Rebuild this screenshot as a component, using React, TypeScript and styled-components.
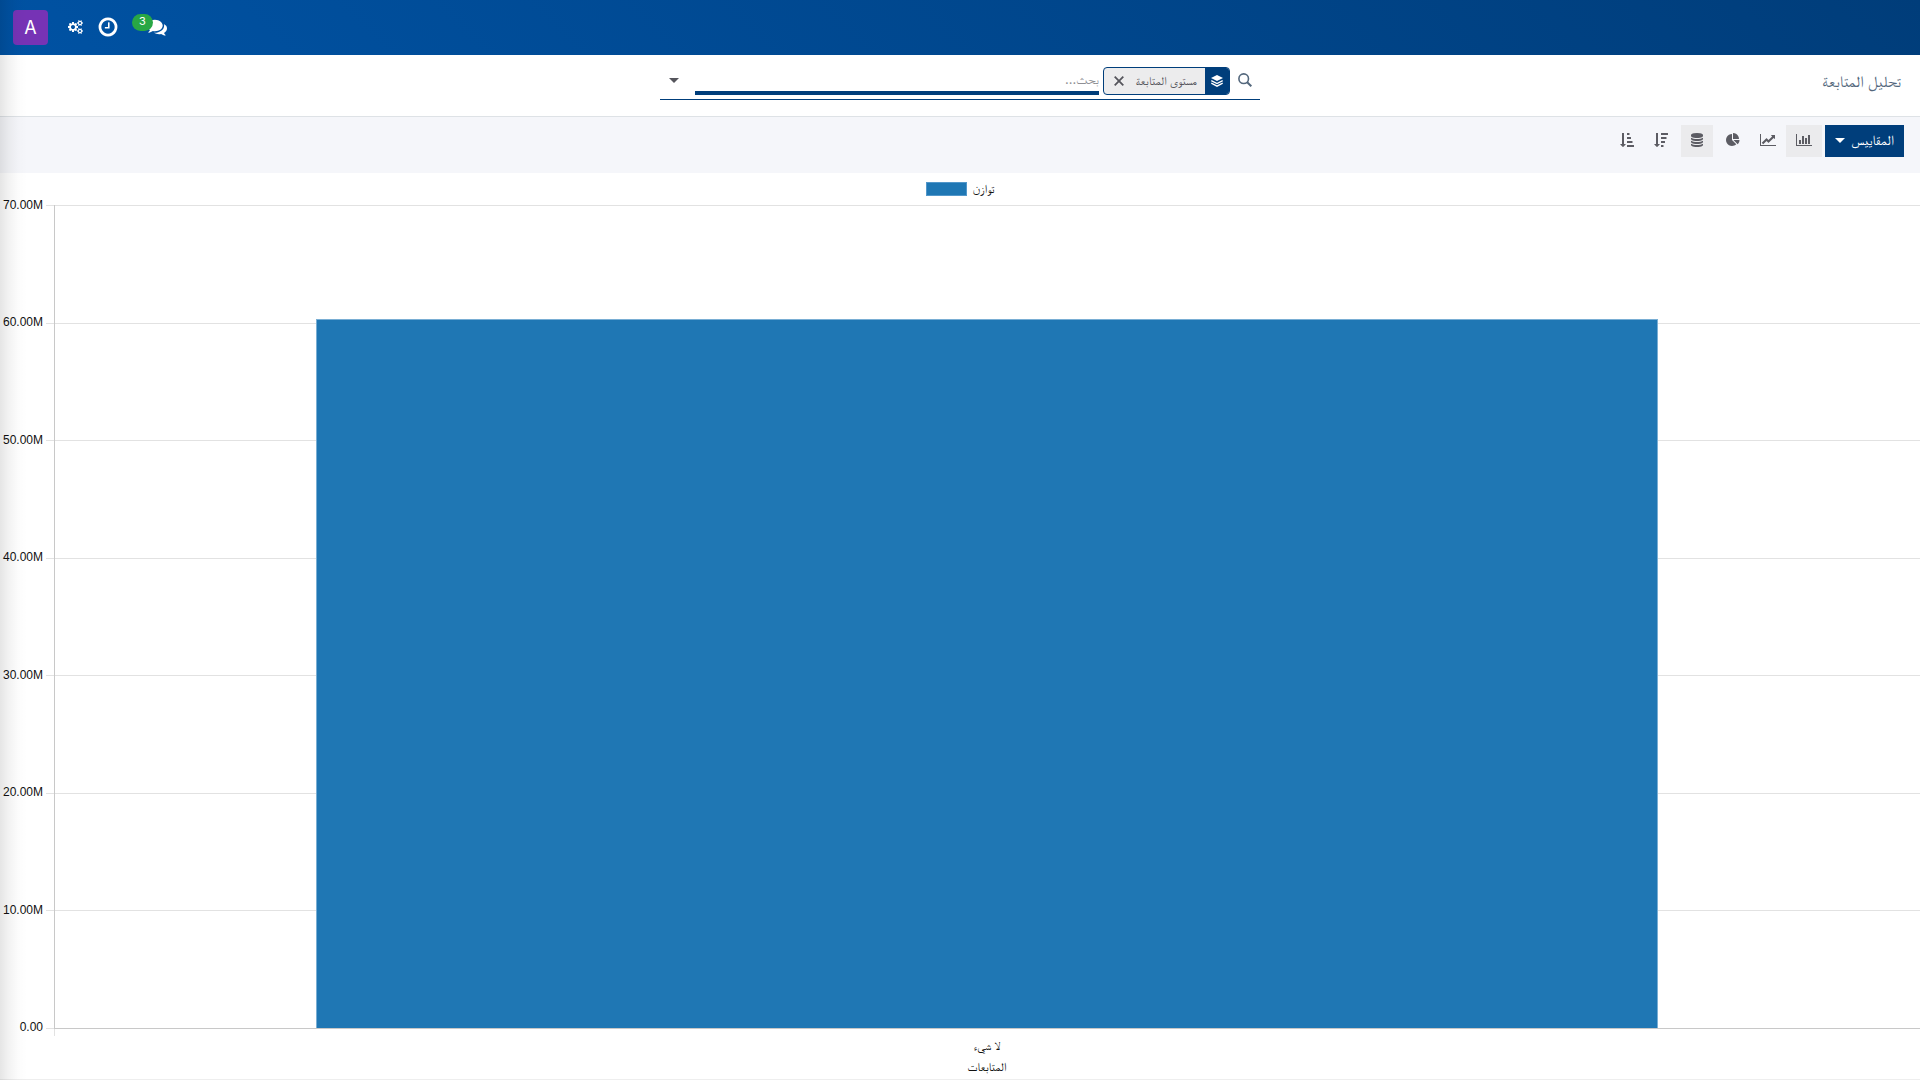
import React from "react";
import styled, { createGlobalStyle } from "styled-components";

const GlobalStyle = createGlobalStyle`
  *, *::before, *::after { box-sizing: border-box; }
  body {
    margin: 0;
    background: #fff;
    color: #55555c;
    font-family: "Inter", "FreeSerif", "Noto Naskh Arabic", sans-serif;
    font-size: 14px;
  }
  button, input { font: inherit; color: inherit; margin: 0; }
`;

const Page = styled.div`
  position: relative;
  display: flex;
  flex-direction: column;
  min-height: 100vh;
  overflow: hidden;
`;

const EdgeShadow = styled.div`
  position: absolute;
  inset: 0 auto 0 0;
  width: 28px;
  pointer-events: none;
  background: linear-gradient(to right, rgba(0, 0, 0, 0.1), rgba(0, 0, 0, 0.05) 30%, rgba(0, 0, 0, 0.01) 65%, transparent);
`;

const Navbar = styled.header`
  display: flex;
  justify-content: flex-end;
  height: 55px;
  padding: 0 13px;
  background: linear-gradient(45deg, #0052a3, #003d7a);
  color: #fff;
`;

const Systray = styled.nav`
  display: flex;
  align-items: center;
  gap: 14px;
`;

const TrayButton = styled.button`
  display: flex;
  align-items: center;
  padding: 0 0 2px;
  border: 0;
  background: none;
  color: #fff;
  cursor: pointer;
`;

const MessagesButton = styled(TrayButton)`
  position: relative;
  margin-left: 14px;
`;

const Counter = styled.span`
  position: absolute;
  left: -15px;
  top: -3px;
  width: 21px;
  height: 17px;
  border-radius: 9px;
  background: #28a745;
  font-size: 11px;
  line-height: 15px;
  text-align: center;
`;

const AvatarButton = styled(TrayButton)`
  justify-content: center;
  width: 35px;
  height: 35px;
  margin-right: 6px;
  padding: 0;
  border-radius: 4px;
  background: #7633b5;
  font-size: 18px;
`;

const Glyph = styled.svg<{ $size: number }>`
  display: block;
  height: ${(p) => p.$size}px;
  fill: currentColor;
`;

const ControlPanel = styled.div`
  display: grid;
  grid-template-columns: 1fr 600px 1fr;
  align-items: start;
  height: 62px;
  padding: 12px 19px 0;
  border-bottom: 1px solid #dee2e6;
`;

const Title = styled.h1`
  margin: 0;
  color: #53677c;
  font-size: 16px;
  font-weight: 400;
  line-height: 28px;
`;

const SearchBar = styled.form`
  display: flex;
  align-items: flex-start;
  height: 33px;
  border-bottom: 1px solid #003e7b;
`;

const SearchIcon = styled.label`
  display: flex;
  width: 30px;
  height: 26px;
  align-items: center;
  justify-content: center;
`;

const Facet = styled.div`
  display: flex;
  height: 28px;
  margin-left: 4px;
  border: 1px solid #003e7b;
  border-radius: 4px;
  background: #ececed;
  overflow: hidden;
`;

const FacetIcon = styled.span`
  display: flex;
  align-items: center;
  justify-content: center;
  width: 24px;
  background: #003e7b;
  color: #fff;
`;

const FacetLabel = styled.span`
  padding: 0 8px 0 4px;
  font-size: 12px;
  line-height: 26px;
`;

const FacetRemove = styled.button`
  display: flex;
  align-items: center;
  padding: 0 8px 0 10px;
  border: 0;
  background: none;
  cursor: pointer;
`;

const SearchInput = styled.input`
  flex: 1;
  min-width: 0;
  height: 28px;
  padding: 0;
  border: 0;
  border-bottom: 4px solid #003e7b;
  outline: 0;
  background: none;
  font-size: 13px;
  &::placeholder { color: #8f8f94; opacity: 1; }
`;

const SearchToggle = styled.button`
  display: flex;
  align-items: center;
  justify-content: flex-end;
  width: 35px;
  height: 26px;
  padding: 0 0 0 9px;
  border: 0;
  background: none;
  cursor: pointer;
`;

const Caret = styled.span`
  border: 5px solid transparent;
  border-top-color: currentColor;
  border-bottom: 0;
`;

const Toolbar = styled.div`
  display: flex;
  gap: 3px;
  padding: 8px 16px 16px;
  background: #f5f6fa;
`;

const ButtonGroup = styled.div`
  display: flex;
`;

const ToolButton = styled.button<{ $active?: boolean }>`
  display: flex;
  align-items: center;
  height: 32px;
  padding: 0 10px 2px;
  border: 0;
  background: ${(p) => (p.$active ? "#ebebed" : "transparent")};
  color: #5c5c63;
  cursor: pointer;
`;

const MeasuresButton = styled.button`
  display: flex;
  align-items: center;
  gap: 6px;
  height: 32px;
  padding: 0 10px 2px;
  border: 0;
  background: #003e7b;
  color: #fff;
  font-size: 14px;
  line-height: 30px;
  cursor: pointer;
`;

const Chart = styled.main`
  flex: 1;
  display: flex;
  flex-direction: column;
  direction: ltr;
  color: #111;
  font-family: "Liberation Sans", "FreeSerif", "Noto Naskh Arabic", sans-serif;
  font-size: 12px;
`;

const Legend = styled.div`
  display: flex;
  align-items: center;
  justify-content: center;
  gap: 6px;
  height: 32px;
`;

const Swatch = styled.span`
  width: 41px;
  height: 14px;
  border: 1px solid #5297ca;
  background: #1f77b4;
`;

const PlotRow = styled.div`
  flex: 1;
  display: flex;
`;

const Scale = styled.div`
  display: flex;
  flex-direction: column;
  justify-content: space-between;
  width: 43px;
  text-align: right;
`;

const Tick = styled.span`
  height: 1px;
  line-height: 0;
`;

const Plot = styled.div`
  flex: 1;
  display: flex;
  margin-left: 11px;
`;

const PlotArea = styled.svg`
  flex: 1;
  width: 100%;
  height: 100%;
  overflow: visible;
`;

const Captions = styled.div`
  display: flex;
  flex-direction: column;
  align-items: center;
  height: 52px;
  padding: 8px 0 0 54px;
  border-bottom: 1px solid #eee;
  line-height: 21px;
`;

const icons = {
  bar: [2048, "M640 896v512h-256v-512h256zm384-512v1024h-256v-1024h256zm1024 1152v128h-2048v-1536h128v1408h1920zm-640-896v768h-256v-768h256zm384-384v1152h-256v-1152h256z"],
  line: [2048, "M2048 1536v128h-2048v-1536h128v1408h1920zm-128-1248v435q0 21-19.5 29.5t-35.5-7.5l-121-121-633 633q-10 10-23 10t-23-10l-233-233-416 416-192-192 585-585q10-10 23-10t23 10l233 233 464-464-121-121q-16-16-7.5-35.5t29.5-19.5h435q14 0 23 9t9 23z"],
  pie: [1792, "M768 890l546 546q-106 108-247.5 168t-298.5 60q-209 0-385.5-103t-279.5-279.5-103-385.5 103-385.5 279.5-279.5 385.5-103v762zm187 6h773q0 157-60 298.5t-168 247.5zm709-128h-768v-768q209 0 385.5 103t279.5 279.5 103 385.5z"],
  database: [1536, "M768 768q237 0 443-43t325-127v170q0 69-103 128t-280 93.5-385 34.5-385-34.5-280-93.5-103-128v-170q119 84 325 127t443 43zm0 768q237 0 443-43t325-127v170q0 69-103 128t-280 93.5-385 34.5-385-34.5-280-93.5-103-128v-170q119 84 325 127t443 43zm0-384q237 0 443-43t325-127v170q0 69-103 128t-280 93.5-385 34.5-385-34.5-280-93.5-103-128v-170q119 84 325 127t443 43zm0-1152q208 0 385 34.5t280 93.5 103 128v128q0 69-103 128t-280 93.5-385 34.5-385-34.5-280-93.5-103-128v-128q0-69 103-128t280-93.5 385-34.5z"],
  descending: [1792, "M736 1440q0 12-10 24l-319 319q-10 9-23 9-12 0-23-9l-320-320q-15-16-7-35 8-20 30-20h192v-1376q0-14 9-23t23-9h192q14 0 23 9t9 23v1376h192q14 0 23 9t9 23zM928 1536h256q32 0 32 32v192q0 32-32 32h-256q-32 0-32-32v-192q0-32 32-32zM928 1024h448q32 0 32 32v192q0 32-32 32h-448q-32 0-32-32v-192q0-32 32-32zM928 512h640q32 0 32 32v192q0 32-32 32h-640q-32 0-32-32v-192q0-32 32-32zM928 0h832q32 0 32 32v192q0 32-32 32h-832q-32 0-32-32v-192q0-32 32-32z"],
  ascending: [1792, "M736 1440q0 12-10 24l-319 319q-10 9-23 9-12 0-23-9l-320-320q-15-16-7-35 8-20 30-20h192v-1376q0-14 9-23t23-9h192q14 0 23 9t9 23v1376h192q14 0 23 9t9 23zM928 0h256q32 0 32 32v192q0 32-32 32h-256q-32 0-32-32v-192q0-32 32-32zM928 512h448q32 0 32 32v192q0 32-32 32h-448q-32 0-32-32v-192q0-32 32-32zM928 1024h640q32 0 32 32v192q0 32-32 32h-640q-32 0-32-32v-192q0-32 32-32zM928 1536h832q32 0 32 32v192q0 32-32 32h-832q-32 0-32-32v-192q0-32 32-32z"],
  clock: [1792, "M1024 544v448q0 14-9 23t-23 9h-320q-14 0-23-9t-9-23v-64q0-14 9-23t23-9h224v-352q0-14 9-23t23-9h64q14 0 23 9t9 23zm416 352q0-148-73-273t-198-198-273-73-273 73-198 198-73 273 73 273 198 198 273 73 273-73 198-198 73-273zm224 0q0 209-103 385.5t-279.5 279.5-385.5 103-385.5-103-279.5-279.5-103-385.5 103-385.5 279.5-279.5 385.5-103 385.5 103 279.5 279.5 103 385.5z"],
  cogs: [1920, "M896 896q0-106-75-181t-181-75-181 75-75 181 75 181 181 75 181-75 75-181zm768 512q0-52-38-90t-90-38-90 38-38 90q0 53 37.5 90.5t90.5 37.5 90.5-37.5 37.5-90.5zm0-1024q0-52-38-90t-90-38-90 38-38 90q0 53 37.5 90.5t90.5 37.5 90.5-37.5 37.5-90.5zm-384 421v185q0 10-7 19.5t-16 10.5l-155 24q-11 35-32 76 34 48 90 115 7 11 7 20 0 12-7 19-23 30-82.5 89.5t-78.5 59.5q-11 0-21-7l-115-90q-37 19-77 31-11 108-23 155-7 24-30 24h-186q-11 0-20-7.5t-10-17.5l-23-153q-34-10-75-31l-118 89q-7 7-20 7-11 0-21-8-144-133-144-160 0-9 7-19 10-14 41-53t47-61q-23-44-35-82l-152-24q-10-1-17-9.5t-7-19.5v-185q0-10 7-19.5t16-10.5l155-24q11-35 32-76-34-48-90-115-7-11-7-20 0-12 7-20 22-30 82-89t79-59q11 0 21 7l115 90q34-18 77-32 11-108 23-154 7-24 30-24h186q11 0 20 7.5t10 17.5l23 153q34 10 75 31l118-89q8-7 20-7 11 0 21 8 144 133 144 160 0 8-7 19-12 16-42 54t-45 60q23 48 34 82l152 23q10 2 17 10.5t7 19.5zm640 533v140q0 16-149 31-12 27-30 52 51 113 51 138 0 4-4 7-122 71-124 71-8 0-46-47t-52-68q-20 2-30 2t-30-2q-14 21-52 68t-46 47q-2 0-124-71-4-3-4-7 0-25 51-138-18-25-30-52-149-15-149-31v-140q0-16 149-31 13-29 30-52-51-113-51-138 0-4 4-7 4-2 35-20t59-34 30-16q8 0 46 46.5t52 67.5q20-2 30-2t30 2q51-71 92-112l6-2q4 0 124 70 4 3 4 7 0 25-51 138 17 23 30 52 149 15 149 31zm0-1024v140q0 16-149 31-12 27-30 52 51 113 51 138 0 4-4 7-122 71-124 71-8 0-46-47t-52-68q-20 2-30 2t-30-2q-14 21-52 68t-46 47q-2 0-124-71-4-3-4-7 0-25 51-138-18-25-30-52-149-15-149-31v-140q0-16 149-31 13-29 30-52-51-113-51-138 0-4 4-7 4-2 35-20t59-34 30-16q8 0 46 46.5t52 67.5q20-2 30-2t30 2q51-71 92-112l6-2q4 0 124 70 4 3 4 7 0 25-51 138 17 23 30 52 149 15 149 31z"],
  comments: [1792, "M1408 768q0 139-94 257t-256.5 186.5-353.5 68.5q-86 0-176-16-124 88-278 128-36 9-86 16h-3q-11 0-20.5-8t-11.5-21q-1-3-1-6.5t.5-6.5 2-6l2.5-5 3.5-5.5 4-5 4.5-5 4-4.5q5-6 23-25t26-29.5 22.5-29 25-38.5 20.5-44q-124-72-195-177t-71-224q0-139 94-257t256.5-186.5 353.5-68.5 353.5 68.5 256.5 186.5 94 257zm384 256q0 120-71 224.5t-195 176.5q10 24 20.5 44t25 38.5 22.5 29 26 29.5 23 25q1 1 4 4.5t4.5 5 4 5 3.5 5.5l2.5 5 2 6 .5 6.5-1 6.5q-3 14-13 22t-22 7q-50-7-86-16-154-40-278-128-90 16-176 16-271 0-472-132 58 4 88 4 161 0 309-45t264-129q125-92 192-212t67-254q0-77-23-152 129 71 204 178t75 230z"],
} as const;

function Icon({ name, size = 14 }: { name: keyof typeof icons; size?: number }) {
  const [width, path] = icons[name];
  return (
    <Glyph $size={size} viewBox={`0 0 ${width} 1792`} aria-hidden="true">
      <path d={path} />
    </Glyph>
  );
}

const ticks = ["70.00M", "60.00M", "50.00M", "40.00M", "30.00M", "20.00M", "10.00M", "0.00"];
const maxValue = 70;
const balance = 60.3;

export default function App() {
  const barTop = (1 - balance / maxValue) * 100;
  return (
    <Page dir="rtl" lang="ar">
      <GlobalStyle />
      <Navbar>
        <Systray>
          <MessagesButton>
            <Icon name="comments" size={20} />
            <Counter>3</Counter>
          </MessagesButton>
          <TrayButton>
            <Icon name="clock" size={22} />
          </TrayButton>
          <TrayButton>
            <Icon name="cogs" size={14} />
          </TrayButton>
          <AvatarButton>A</AvatarButton>
        </Systray>
      </Navbar>

      <ControlPanel>
        <Title>تحليل المتابعة</Title>
        <SearchBar onSubmit={(e) => e.preventDefault()}>
          <SearchIcon htmlFor="search">
            <Glyph $size={14} viewBox="0 0 14 14" aria-hidden="true">
              <g fill="none" stroke="#53677c" strokeWidth="1.6">
                <circle cx="5.7" cy="5.7" r="4.8" />
                <path d="M9.2 9.2L13.3 13.3" strokeWidth="2" />
              </g>
            </Glyph>
          </SearchIcon>
          <Facet>
            <FacetIcon>
              <Glyph $size={12} viewBox="0 0 12 12" aria-hidden="true">
                <path d="M6 0L12 3L6 6L0 3Z" />
                <path d="M0.3 5.6L6 8.5L11.7 5.6M0.3 8.2L6 11.2L11.7 8.2" fill="none" stroke="currentColor" strokeWidth="1.3" />
              </Glyph>
            </FacetIcon>
            <FacetLabel>مستوى المتابعة</FacetLabel>
            <FacetRemove type="button">
              <Glyph $size={10} viewBox="0 0 10 10" aria-hidden="true">
                <path d="M0.7 0.7L9.3 9.3M9.3 0.7L0.7 9.3" stroke="currentColor" strokeWidth="1.8" />
              </Glyph>
            </FacetRemove>
          </Facet>
          <SearchInput id="search" placeholder="بحث..." />
          <SearchToggle type="button">
            <Caret />
          </SearchToggle>
        </SearchBar>
      </ControlPanel>

      <Toolbar>
        <MeasuresButton>
          المقاييس
          <Caret />
        </MeasuresButton>
        <ButtonGroup>
          <ToolButton $active><Icon name="bar" /></ToolButton>
          <ToolButton><Icon name="line" /></ToolButton>
          <ToolButton><Icon name="pie" /></ToolButton>
        </ButtonGroup>
        <ToolButton $active><Icon name="database" /></ToolButton>
        <ButtonGroup>
          <ToolButton><Icon name="descending" /></ToolButton>
          <ToolButton><Icon name="ascending" /></ToolButton>
        </ButtonGroup>
      </Toolbar>

      <Chart>
        <Legend>
          <Swatch />
          <span>توازن</span>
        </Legend>
        <PlotRow>
          <Scale>
            {ticks.map((t) => (
              <Tick key={t}>{t}</Tick>
            ))}
          </Scale>
          <Plot>
            <PlotArea shapeRendering="crispEdges">
              {ticks.map((t, i) => {
                const y = `${(i / (ticks.length - 1)) * 100}%`;
                return (
                  <g key={t} fill="#e2e2e2">
                    <rect x="-8" y={y} width="8" height="1" />
                    <rect y={y} width="100%" height="1" />
                  </g>
                );
              })}
              <rect width="1" height="100%" fill="#c8c8c8" />
              <rect y="100%" width="1" height="8" fill="#e2e2e2" />
              <rect x="14.05%" width="71.9%" y={`${barTop}%`} height={`${100 - barTop}%`} fill="#1f77b4" stroke="#79aed4" />
              <rect y="100%" width="100%" height="1" fill="#c8c8c8" />
            </PlotArea>
          </Plot>
        </PlotRow>
        <Captions>
          <span dir="rtl">لا شيء</span>
          <span dir="rtl">المتابعات</span>
        </Captions>
      </Chart>
      <EdgeShadow />
    </Page>
  );
}
